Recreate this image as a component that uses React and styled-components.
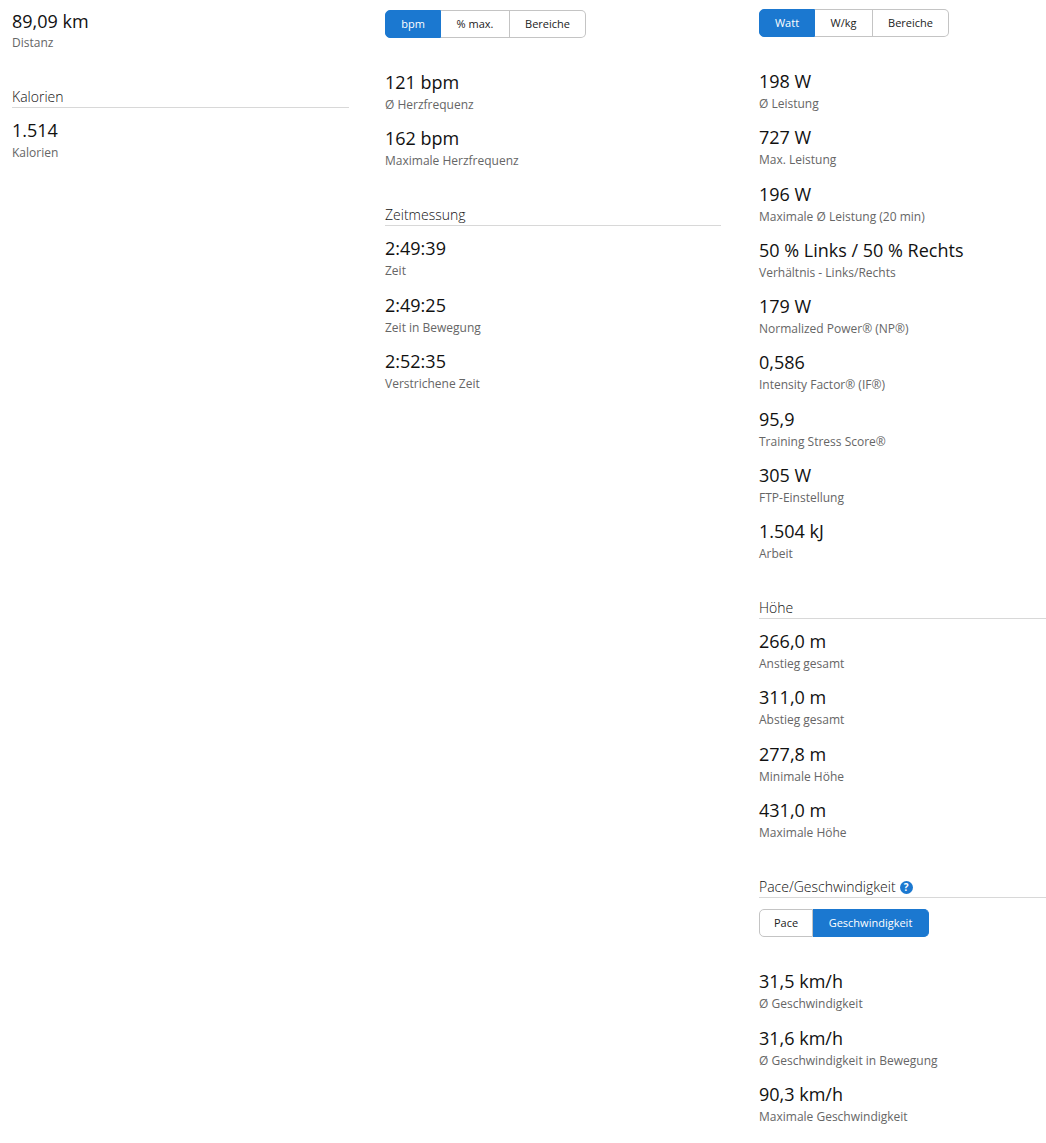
import React from "react";
import styled, { createGlobalStyle } from "styled-components";

const GlobalStyle = createGlobalStyle`
  html, body {
    margin: 0;
    padding: 0;
    background: #fff;
    overflow: hidden;
  }
  body {
    font-family: "Open Sans", "Noto Sans", sans-serif;
  }
`;

const Page = styled.div`
  width: 1046px;
  height: 1143px;
  box-sizing: border-box;
  padding-left: 12px;
  display: grid;
  grid-template-columns: 373px 374px 287px;
  align-items: start;
  overflow: hidden;
`;

const Column = styled.div`
  padding: ${(p) => p.$top}px ${(p) => p.$right}px 0 0;
  display: flex;
  flex-direction: column;
`;

const Item = styled.div`
  height: 56.25px;
  display: flex;
  flex-direction: column;
`;

const Value = styled.div`
  font-size: 18px;
  line-height: 24px;
  color: #111;
`;

const Label = styled.div`
  font-size: 12px;
  line-height: 18px;
  margin-top: ${(p) => p.$gap}px;
  color: #666;
`;

const Heading = styled.h3`
  margin: ${(p) => p.$top}px 0 10px;
  height: 20px;
  font-size: 14px;
  line-height: 20px;
  font-weight: 300;
  color: #111;
  border-bottom: 1px solid #d8d8d8;
  display: flex;
  align-items: center;
  gap: 4px;
`;

const Toggle = styled.div`
  display: inline-flex;
  align-self: flex-start;
  height: 28px;
  margin: ${(p) => p.$top}px 0 32px;
`;

const ToggleButton = styled.div`
  box-sizing: border-box;
  width: ${(p) => p.$width}px;
  font-size: 11px;
  line-height: 16px;
  font-weight: 500;
  display: flex;
  align-items: center;
  justify-content: center;
  color: ${(p) => (p.$active ? "#fff" : "#222")};
  background: ${(p) => (p.$active ? "#1b78d0" : "#fff")};
  border: 1px solid ${(p) => (p.$active ? "#1b78d0" : "#c4c4c4")};
  border-left-width: 0;
  &:first-child {
    border-left-width: 1px;
    border-radius: 5px 0 0 5px;
  }
  &:last-child {
    border-radius: 0 5px 5px 0;
  }
`;

const HelpIcon = styled.span`
  width: 13px;
  height: 13px;
  margin-top: 2px;
  border-radius: 50%;
  background: #1b78d0;
  color: #fff;
  font-size: 10px;
  font-weight: 700;
  line-height: 13px;
  text-align: center;
`;

const Stat = ({ value, label, gap = 2 }) => (
  <Item>
    <Value>{value}</Value>
    <Label $gap={gap}>{label}</Label>
  </Item>
);

const Buttons = ({ items, active, top = 0 }) => (
  <Toggle $top={top}>
    {items.map(([name, width]) => (
      <ToggleButton key={name} $width={width} $active={name === active}>
        {name}
      </ToggleButton>
    ))}
  </Toggle>
);

const power = [
  ["198 W", "Ø Leistung"],
  ["727 W", "Max. Leistung"],
  ["196 W", "Maximale Ø Leistung (20 min)"],
  ["50 % Links / 50 % Rechts", "Verhältnis - Links/Rechts"],
  ["179 W", "Normalized Power® (NP®)"],
  ["0,586", "Intensity Factor® (IF®)"],
  ["95,9", "Training Stress Score®"],
  ["305 W", "FTP-Einstellung"],
  ["1.504 kJ", "Arbeit"],
];

const height = [
  ["266,0 m", "Anstieg gesamt"],
  ["311,0 m", "Abstieg gesamt"],
  ["277,8 m", "Minimale Höhe"],
  ["431,0 m", "Maximale Höhe"],
];

const speed = [
  ["31,5 km/h", "Ø Geschwindigkeit"],
  ["31,6 km/h", "Ø Geschwindigkeit in Bewegung"],
  ["90,3 km/h", "Maximale Geschwindigkeit"],
];

const timing = [
  ["2:49:39", "Zeit"],
  ["2:49:25", "Zeit in Bewegung"],
  ["2:52:35", "Verstrichene Zeit"],
];

const renderStats = (rows) => rows.map(([v, l]) => <Stat key={l} value={v} label={l} />);

export default function App() {
  return (
    <Page>
      <GlobalStyle />
      <Column $top={9} $right={36}>
        <Stat value="89,09 km" label="Distanz" gap={1} />
        <Heading $top={22}>Kalorien</Heading>
        <Stat value="1.514" label="Kalorien" />
      </Column>
      <Column $top={10} $right={38}>
        <Buttons items={[["bpm", 56], ["% max.", 69], ["Bereiche", 76]]} active="bpm" />
        <Stat value="121 bpm" label="Ø Herzfrequenz" />
        <Stat value="162 bpm" label="Maximale Herzfrequenz" />
        <Heading $top={22.75}>Zeitmessung</Heading>
        {renderStats(timing)}
      </Column>
      <Column $top={9} $right={0}>
        <Buttons items={[["Watt", 56], ["W/kg", 58], ["Bereiche", 76]]} active="Watt" />
        {renderStats(power)}
        <Heading $top={22.75}>Höhe</Heading>
        {renderStats(height)}
        <Heading $top={22.75}>
          Pace/Geschwindigkeit <HelpIcon>?</HelpIcon>
        </Heading>
        <Buttons items={[["Pace", 54], ["Geschwindigkeit", 116]]} active="Geschwindigkeit" top={1.5} />
        {renderStats(speed)}
      </Column>
    </Page>
  );
}
